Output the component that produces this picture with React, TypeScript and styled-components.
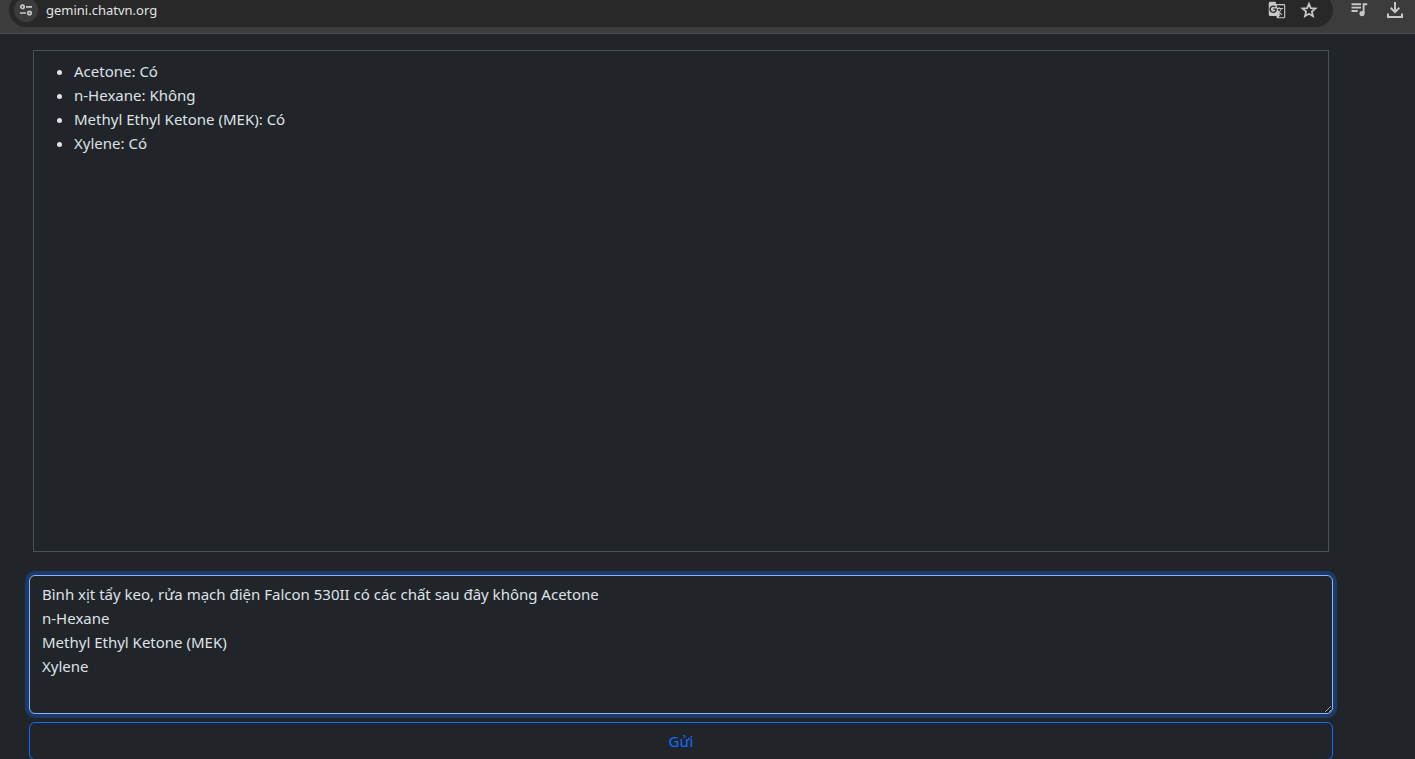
import React, { useState } from "react";
import styled, { createGlobalStyle } from "styled-components";
import { MdGTranslate } from "react-icons/md";

const GlobalStyle = createGlobalStyle`
  *, *::before, *::after { box-sizing: border-box; }
  html { color-scheme: dark; }
  body {
    margin: 0;
    background: #212529;
    color: #dee2e6;
    font-family: "Noto Sans", "Open Sans", sans-serif;
    font-size: 15px;
    line-height: 24px;
  }
`;

const Page = styled.div`
  height: 100vh;
  overflow: hidden;
`;

const BrowserBar = styled.header`
  display: flex;
  align-items: flex-end;
  height: 34px;
  padding: 0 8px 6px 9px;
  overflow: hidden;
  background: #3c3c3c;
  border-bottom: 1px solid #4a4b4c;
`;

const AddressBar = styled.div`
  display: flex;
  flex: 1;
  align-items: center;
  height: 34px;
  padding: 0 12px 0 5px;
  border-radius: 17px;
  background: #282828;
`;

const AddressInput = styled.input`
  flex: 1;
  min-width: 0;
  margin-left: 8px;
  padding: 0;
  border: 0;
  outline: 0;
  background: transparent;
  color: #e3e3e3;
  font-family: inherit;
  font-size: 13px;
  line-height: 20px;
`;

const IconButton = styled.button<{ $filled?: boolean }>`
  display: flex;
  flex: none;
  align-items: center;
  justify-content: center;
  width: 24px;
  height: 24px;
  padding: 0;
  border: 0;
  border-radius: 12px;
  background: ${({ $filled }) => ($filled ? "#3c3c3c" : "transparent")};
  color: #c7c7c7;
`;

const AddressActions = styled.div`
  display: flex;
  gap: 8px;
`;

const Toolbar = styled.div`
  display: flex;
  flex: none;
  align-items: center;
  gap: 12px;
  height: 34px;
  margin-left: 14px;
`;

const Main = styled.main`
  display: flex;
  flex-direction: column;
  padding: 16px 82px 0 29px;
`;

const Answer = styled.section`
  height: 502px;
  margin: 0 4px 23px;
  padding: 8px;
  border: 1px solid #495057;
  overflow: auto;
`;

const AnswerList = styled.ul`
  margin: 0;
  padding-left: 32px;
`;

const Form = styled.form`
  display: flex;
  flex-direction: column;
  gap: 8px;
`;

const Prompt = styled.textarea`
  display: block;
  width: 100%;
  height: 139px;
  padding: 6px 12px;
  border: 1px solid #86b7fe;
  border-radius: 6px;
  outline: 0;
  box-shadow: 0 0 0 4px rgba(13, 110, 253, 0.3);
  background: #212529;
  color: #dee2e6;
  font: inherit;
  resize: vertical;
`;

const SendButton = styled.button`
  height: 38px;
  padding: 6px 12px;
  border: 1px solid #0d6efd;
  border-radius: 6px;
  background: transparent;
  color: #0d6efd;
  font: inherit;
`;

const results = [
  "Acetone: Có",
  "n-Hexane: Không",
  "Methyl Ethyl Ketone (MEK): Có",
  "Xylene: Có",
];

const question = `Bình xịt tẩy keo, rửa mạch điện Falcon 530II có các chất sau đây không Acetone
n-Hexane
Methyl Ethyl Ketone (MEK)
Xylene`;

const SiteInfoIcon = () => (
  <svg width="16" height="16" viewBox="0 0 16 16" fill="none" stroke="currentColor" strokeWidth="1.7">
    <circle cx="4.5" cy="4.8" r="1.7" />
    <path d="M8 4.8h6M2 11h6" />
    <circle cx="11.5" cy="11" r="1.7" />
  </svg>
);

const StarIcon = () => (
  <svg width="18" height="18" viewBox="0 0 18 18" fill="none" stroke="currentColor" strokeWidth="1.8">
    <path d="M9 2.8l1.8 4.3 4.7.4-3.6 3.1 1.1 4.6L9 12.8l-4 2.4 1.1-4.6-3.6-3.1 4.7-.4z" />
  </svg>
);

const QueueMusicIcon = () => (
  <svg width="18" height="18" viewBox="0 0 18 18">
    <path
      d="M1.5 3.2h9.5M1.5 6.6h9.5M1.5 10h6.2M13.6 12.5V3.2h3.6"
      fill="none"
      stroke="currentColor"
      strokeWidth="1.9"
    />
    <circle cx="12" cy="12.6" r="2.6" fill="currentColor" />
  </svg>
);

const DownloadIcon = () => (
  <svg width="18" height="18" viewBox="0 0 18 18" fill="none" stroke="currentColor" strokeWidth="2">
    <path d="M9 1v10M4.7 6.8 9 11.1l4.3-4.3M2 12.5V16h14v-3.5" />
  </svg>
);

export default function App() {
  const [address, setAddress] = useState("gemini.chatvn.org");
  const [prompt, setPrompt] = useState(question);

  return (
    <Page>
      <GlobalStyle />
      <BrowserBar>
        <AddressBar>
          <IconButton type="button" $filled aria-label="Site information">
            <SiteInfoIcon />
          </IconButton>
          <AddressInput
            aria-label="Address"
            value={address}
            spellCheck={false}
            onChange={(e) => setAddress(e.target.value)}
          />
          <AddressActions>
            <IconButton type="button" aria-label="Translate this page">
              <MdGTranslate size={18} />
            </IconButton>
            <IconButton type="button" aria-label="Bookmark this tab">
              <StarIcon />
            </IconButton>
          </AddressActions>
        </AddressBar>
        <Toolbar>
          <IconButton type="button" aria-label="Media controls">
            <QueueMusicIcon />
          </IconButton>
          <IconButton type="button" aria-label="Downloads">
            <DownloadIcon />
          </IconButton>
        </Toolbar>
      </BrowserBar>
      <Main>
        <Answer>
          <AnswerList>
            {results.map((item) => (
              <li key={item}>{item}</li>
            ))}
          </AnswerList>
        </Answer>
        <Form onSubmit={(e) => e.preventDefault()}>
          <Prompt
            aria-label="Câu hỏi"
            value={prompt}
            spellCheck={false}
            onChange={(e) => setPrompt(e.target.value)}
          />
          <SendButton type="submit">Gửi</SendButton>
        </Form>
      </Main>
    </Page>
  );
}
